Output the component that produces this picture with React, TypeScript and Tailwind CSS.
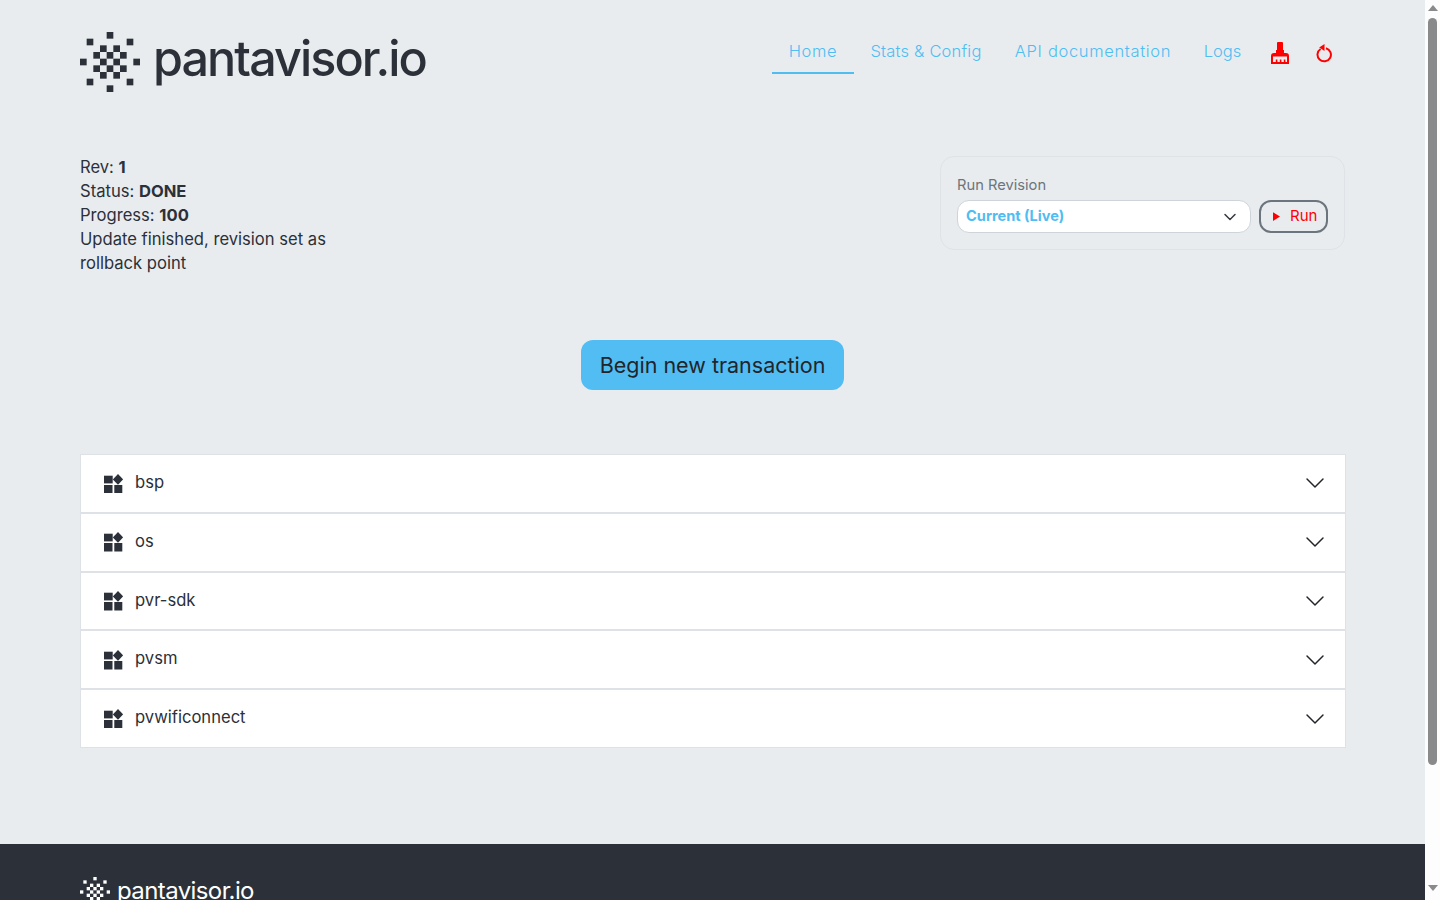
import { ChevronDown } from "lucide-react"

const CELLS = [
  [4, 0], [1, 1], [7, 1], [3, 2], [5, 2], [2, 3], [4, 3], [6, 3],
  [0, 4], [3, 4], [5, 4], [8, 4], [2, 5], [4, 5], [6, 5], [3, 6], [5, 6],
  [1, 7], [7, 7], [4, 8],
]

const PARTS = ["bsp", "os", "pvr-sdk", "pvsm", "pvwificonnect"]

function LogoMark({ className }: { className: string }) {
  return (
    <svg viewBox="0 0 9 9" className={className} fill="currentColor">
      {CELLS.map(([x, y]) => (
        <rect key={`${x}-${y}`} x={x} y={y} width="1" height="1" />
      ))}
    </svg>
  )
}

function BroomIcon() {
  return (
    <svg viewBox="0 0 18 22" className="h-[22px] w-[18px]" fill="#ff0000">
      <path d="M6 1a1 1 0 0 1 1-1h4a1 1 0 0 1 1 1v7h1v3h2a3 3 0 0 1 3 3v8H0v-8a3 3 0 0 1 3-3h2V8h1z" />
      <path d="M2 14.5h14V20h-1.6v-2.5h-1.6V20h-2.4v-2.5H8.8V20H6.4v-2.5H4.8V20H2z" fill="#e8ecef" />
    </svg>
  )
}

function ReloadIcon() {
  return (
    <svg viewBox="0 0 16 19" className="h-[19px] w-4" fill="none">
      <path d="M4.6 5A6.7 6.7 0 1 0 10 4.2" stroke="#ff0000" strokeWidth="2" />
      <path d="M8.5 0v7L3.2 3.4z" fill="#ff0000" />
    </svg>
  )
}

function PartIcon() {
  return (
    <svg viewBox="0 0 19 19.5" className="h-[19.5px] w-[19px] shrink-0" fill="#2c3039">
      <rect x="0" y="1.7" width="8.7" height="7.7" />
      <rect x="0" y="11" width="8.5" height="8.5" />
      <rect x="10.3" y="11" width="8" height="8.5" />
      <path d="M14 0l5.2 5.4L14 10.8 8.8 5.4z" />
    </svg>
  )
}

export default function App() {
  return (
    <div className="flex h-[900px] w-[1440px] overflow-hidden bg-[#e8ecef] font-['Inter',sans-serif] text-[#2c3039]">
      <div className="flex h-[900px] w-[1425px] flex-col overflow-hidden">
        <main className="h-[844px] shrink-0 pl-[80px] pr-[80px] pt-[32px]">
          <header className="flex h-[60px] items-center justify-between">
            <div className="flex items-center gap-[13px]">
              <LogoMark className="h-[60px] w-[60px] text-[#2c3039]" />
              <span className="mb-[7px] text-[48.5px] font-[450] leading-[52px] tracking-[-0.04em]">pantavisor.io</span>
            </div>
            <nav className="mr-[1px] flex h-[60px] items-start pt-[2px] text-[16.5px] font-light text-[#4fbdf2]">
              <a className="h-[40px] w-[82px] border-b-2 border-[#4fbdf2] pt-[5px] text-center tracking-[0.04em]">Home</a>
              <a className="h-[40px] w-[144px] pt-[5px] text-center tracking-[0.012em]">Stats &amp; Config</a>
              <a className="h-[40px] w-[190px] pt-[5px] text-center tracking-[0.04em]">API documentation</a>
              <a className="h-[40px] w-[69px] pt-[5px] text-center">Logs</a>
              <div className="ml-[14px] flex w-[18px] pt-[8px]">
                <BroomIcon />
              </div>
              <div className="ml-[27px] mr-[12px] flex pt-[10px]">
                <ReloadIcon />
              </div>
            </nav>
          </header>

          <section className="mt-[63px] flex items-start justify-between">
            <div className="w-[260px] text-[16.6px] leading-[24px]">
              <div>Rev: <b>1</b></div>
              <div>Status: <b>DONE</b></div>
              <div>Progress: <b>100</b></div>
              <div>Update finished, revision set as rollback point</div>
            </div>
            <div className="mt-px h-[94px] w-[405px] rounded-[14px] border border-[#dfe3e7] px-4 pt-[19px]">
              <div className="text-[14.7px] leading-[18px] text-[#6c757d]">Run Revision</div>
              <div className="mt-[6px] flex items-center gap-2">
                <div className="flex h-[33px] w-[294px] items-center justify-between rounded-xl border border-[#ced4da] bg-white pl-2 pr-[10px] text-[14.6px] font-bold text-[#4fbdf2]">
                  Current (Live)
                  <ChevronDown size={20} strokeWidth={1.8} className="text-[#343a40]" />
                </div>
                <div className="flex h-[33px] w-[69px] items-center gap-[10px] rounded-xl border-2 border-[#6c757d] pb-[1px] pl-[12px] text-[15px] text-[#ff0000]">
                  <svg viewBox="0 0 8 10" className="h-[9px] w-[7px]" fill="#ff0000"><path d="M0 0l8 5-8 5z" /></svg>
                  Run
                </div>
              </div>
            </div>
          </section>

          <div className="mt-[65px] flex justify-center">
            <button className="h-[50px] w-[263px] rounded-xl bg-[#52bdf3] text-[21.5px] text-[#212529]">
              Begin new transaction
            </button>
          </div>

          <div className="-mr-px mt-[64px]">
            {PARTS.map((part) => (
              <div key={part} className="flex h-[58.8px] items-center border border-[#dee2e6] bg-white pl-[23px] pr-[14px]">
                <PartIcon />
                <span className="ml-[12px] pb-[2px] text-[16.6px]">{part}</span>
                <ChevronDown size={32} strokeWidth={1.1} className="ml-auto text-[#212529]" />
              </div>
            ))}
          </div>
        </main>

        <footer className="h-[56px] shrink-0 bg-[#2c3039] pl-[80px] pt-[32px] text-white">
          <div className="flex items-center gap-[7px]">
            <LogoMark className="h-[30px] w-[30px] text-white" />
            <span className="mb-[2px] text-[24px] leading-[30px] tracking-[-0.025em]">pantavisor.io</span>
          </div>
        </footer>
      </div>

      <div className="flex h-[900px] w-[15px] flex-col items-center bg-[#fdfdfd] pt-[5px]">
        <div className="h-0 w-0 border-x-[5px] border-b-[6px] border-x-transparent border-b-[#8a8a8a]" />
        <div className="mt-[7px] h-[747px] w-[9px] rounded-[5px] bg-[#8a8a8a]" />
        <div className="mt-[120px] h-0 w-0 border-x-[5px] border-t-[6px] border-x-transparent border-t-[#8a8a8a]" />
      </div>
    </div>
  )
}
